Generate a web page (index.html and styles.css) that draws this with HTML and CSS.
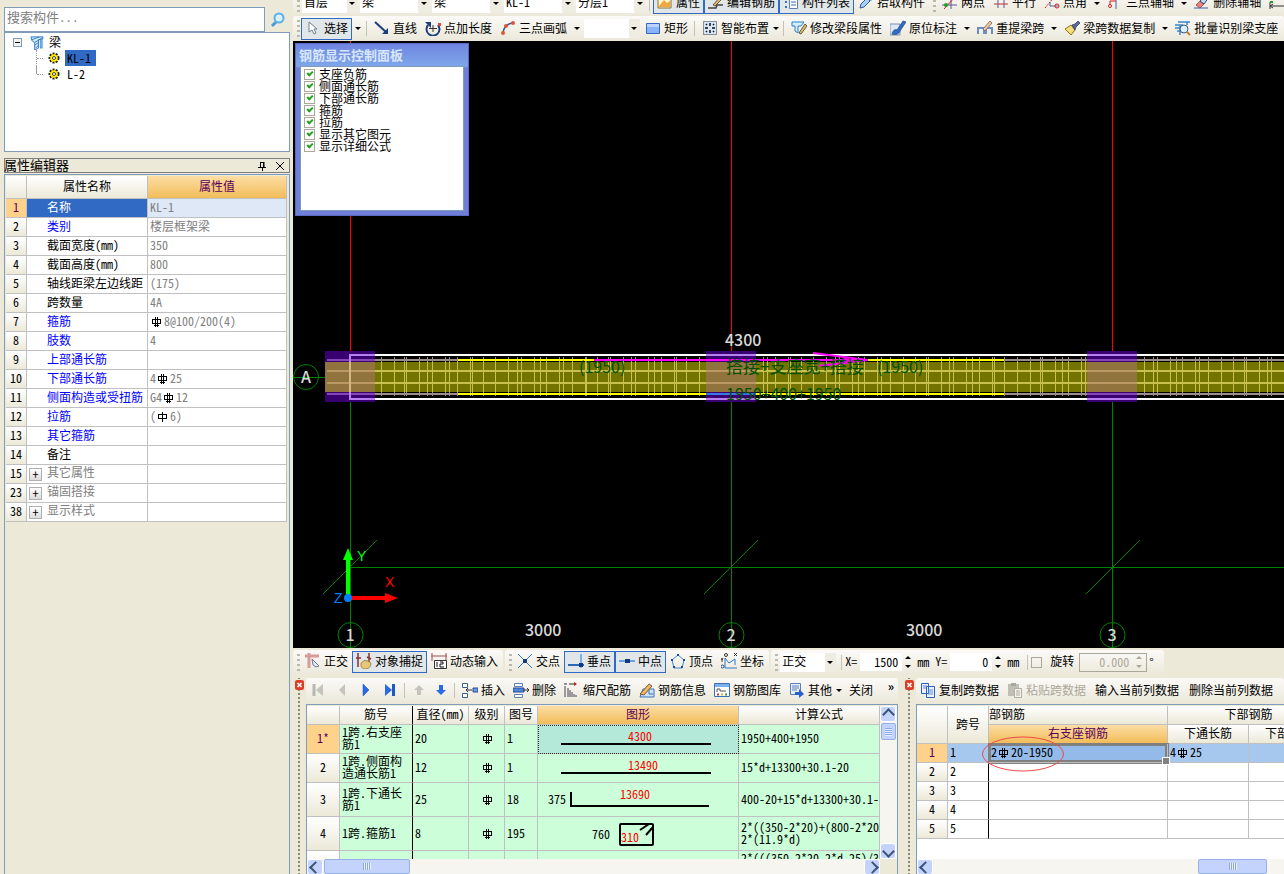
FILE: index.html
```html
<!DOCTYPE html>
<html lang="zh-CN">
<head>
    <meta charset="UTF-8">
    <meta name="viewport" content="width=device-width, initial-scale=1.0">
    <title>梁 - 钢筋编辑</title>
    <link rel="stylesheet" href="styles.css">
</head>
<body>
    <!-- icons -->
    <svg class="defs" aria-hidden="true">
        <symbol id="i-arrow" viewBox="0 0 16 16"><path d="M4 2v10l3-2 2 4 2-1-2-4h3z" fill="#fff" stroke="#6a7f9c"/></symbol>
        <symbol id="i-line" viewBox="0 0 16 16"><path d="M1 2l11 10" stroke="#1b3f7c" stroke-width="2"/><path d="M14 8v6H8z" fill="#1b3f7c"/></symbol>
        <symbol id="i-length" viewBox="0 0 16 16"><path d="M3 5a6.500 6.500 0 1 0 10 0" fill="none" stroke="#1d3e7a" stroke-width="2"/><path d="M0 2h6v6z" fill="#1d3e7a"/><path d="M8 5v7M4 8.500h8" stroke="#333"/><path d="M13 3h3v3h-3z" fill="#d04a4a"/></symbol>
        <symbol id="i-arc" viewBox="0 0 16 16"><path d="M3 13Q4 4 13 3" fill="none" stroke="#2c5a9c" stroke-width="1.500"/><circle cx="3" cy="13" r="2" fill="#e0563c"/><circle cx="6" cy="6" r="2" fill="#e0563c"/><circle cx="13" cy="3" r="2" fill="#e0563c"/></symbol>
        <symbol id="i-rect" viewBox="0 0 16 16"><path d="M1.500 3.500h13v10h-13z" fill="#8ab4f8" stroke="#3565c8"/><path d="M2 4h12v3H2z" fill="#bcd4ff"/></symbol>
        <symbol id="i-smart" viewBox="0 0 16 16"><path d="M1.500 1.500h13v13h-13z" fill="#d5e6f8" stroke="#333" stroke-dasharray="1 1"/><path d="M8 3v3M8 10v3M3 8h3M10 8h3M4 4l1 1M11 11l1 1M12 4l-1 1M5 11l-1 1" stroke="#111" stroke-width="1.500"/></symbol>
        <symbol id="i-modify" viewBox="0 0 16 16"><path d="M1 2h12l-3 4H7v7l-3-2V6H1z" fill="#d5efff" stroke="#2a80c8"/><path d="M8 13l6-9 2 2-6 8z" fill="#e6c35a" stroke="#333" stroke-width=".8"/></symbol>
        <symbol id="i-mark" viewBox="0 0 16 16"><path d="M0 4h10v11H0z" fill="#dce8f8" stroke="#7a90b0"/><path d="M2 14c1-4 3-5 5-4l6-9 3 1-6 9c-1 3-4 4-8 3z" fill="#2f6fc8" stroke="#1d3e7a" stroke-width=".7"/></symbol>
        <symbol id="i-span" viewBox="0 0 16 16"><path d="M1 14V8h6v6M9 14V8h6v6" fill="none" stroke="#6a8fc8" stroke-width="2"/><path d="M6 9l7-8 2 2-7 8z" fill="#e8c8a0" stroke="#806050" stroke-width=".8"/></symbol>
        <symbol id="i-brush" viewBox="0 0 16 16"><path d="M1 9l6-4 4 5-4 5z" fill="#f2df7a" stroke="#8a7420"/><path d="M8 5l3-1 3-3 2 2-4 4-1 3z" fill="#5a6a94" stroke="#38406a" stroke-width=".8"/></symbol>
        <symbol id="i-batch" viewBox="0 0 16 16"><path d="M0 5h8M3 2h12M0 8h6M2 11h4M5 5v10M12 2v3" stroke="#3a86cc" stroke-width="1.500"/><circle cx="9" cy="9" r="4" fill="#d8f0ff" stroke="#3a5a80"/><path d="M12 12l3 3" stroke="#c87a2a" stroke-width="2"/></symbol>
        <symbol id="i-prop" viewBox="0 0 16 16"><path d="M1 3h13v11H1z" fill="#fff4c8" stroke="#8a7040"/><path d="M2 12l5-6 3 3 3-2v6H2z" fill="#f0a840"/></symbol>
        <symbol id="i-edit" viewBox="0 0 16 16"><path d="M0 14h8l1-3h6" fill="none" stroke="#444" stroke-width="1.500"/><path d="M5 11l7-8 2 2-7 7z" fill="#e0b860" stroke="#444" stroke-width=".8"/></symbol>
        <symbol id="i-list" viewBox="0 0 16 16"><path d="M2 3h2M2 8h2M2 13h2" stroke="#3a70c0" stroke-width="2"/><path d="M6.500 1.500h8v13h-8z" fill="#fff" stroke="#5a80b8"/><path d="M8 5h5M8 8h5M8 11h5" stroke="#3a70c0"/></symbol>
        <symbol id="i-pick" viewBox="0 0 16 16"><path d="M2 14l1-4 6-6 3 3-6 6z" fill="#a8d0f8" stroke="#2a5aa0"/><path d="M9 3l3-2 3 3-2 3z" fill="#2a5aa0"/></symbol>
        <symbol id="i-twopt" viewBox="0 0 16 16"><path d="M0 11h15M9 1v14" stroke="#555a9c"/><path d="M2 15L13 3" stroke="#d02020"/><circle cx="4" cy="11" r="2" fill="#2a9a2a"/></symbol>
        <symbol id="i-parallel" viewBox="0 0 16 16"><path d="M5 1v13M11 1v13" stroke="#555a9c"/><path d="M1 5h14M1 10h14" stroke="#c03030"/></symbol>
        <symbol id="i-angle" viewBox="0 0 16 16"><path d="M1 14L11 2" stroke="#d02020" stroke-dasharray="2 1"/><path d="M6 8v4h8" fill="none" stroke="#555a9c"/><circle cx="13" cy="12" r="2" fill="none" stroke="#d02020"/></symbol>
        <symbol id="i-three" viewBox="0 0 16 16"><path d="M1 5h14M9 2v13" stroke="#4a60a8"/><path d="M3 12V7h6" fill="none" stroke="#d02020"/><circle cx="3" cy="12" r="1.500" fill="#fff" stroke="#d02020"/></symbol>
        <symbol id="i-erase" viewBox="0 0 16 16"><path d="M0 14h14" stroke="#3a60a8"/><path d="M2 11l4-4 4 3-4 4z" fill="#f08080" stroke="#803030" stroke-width=".7"/><path d="M6 7l6-6 3 2-5 7z" fill="#c8d8f0" stroke="#2a4a80"/></symbol>
        <symbol id="i-dim" viewBox="0 0 16 16"><path d="M1 8v7M1 12h14M4 10l-3 2 3 2" fill="none" stroke="#333"/><path d="M1 7h3v2H1z" fill="#2a9a2a"/></symbol>
        <symbol id="i-ortho" viewBox="0 0 16 16"><path d="M0 3h14M4 0v15" stroke="#d89a9a" stroke-width="3"/><path d="M7 6l7 7-3 1-3-2z" fill="#e6ebf4" stroke="#6a7894"/></symbol>
        <symbol id="i-snap" viewBox="0 0 16 16"><path d="M2 0v14M0 5h5M13 0v9M11 4l4 2" stroke="#8a3030" stroke-width="1.500"/><path d="M5 10q3-4 7-2l3 2q0 5-5 6-6 0-5-6z" fill="#e6c878" stroke="#8a6a30" stroke-width=".7"/></symbol>
        <symbol id="i-dyn" viewBox="0 0 16 16"><path d="M0 3h16M1 0v8M15 0v8" stroke="#a05050"/><path d="M3.500 7.500h12v8h-12z" fill="#fff" stroke="#333"/><path d="M6 9v5M9 9h3v2H9v3h4" fill="none" stroke="#111"/></symbol>
        <symbol id="i-cross" viewBox="0 0 16 16"><path d="M1 1l14 14M15 1L1 15" stroke="#2a78c8"/><path d="M6 6h4v4H6z" fill="#123a7a"/></symbol>
        <symbol id="i-perp" viewBox="0 0 16 16"><path d="M13 1v14" stroke="#7ab0e8" stroke-width="2"/><path d="M0 12h16" stroke="#2a68b8" stroke-width="2"/><path d="M11 10h4v4h-4z" fill="#123a7a"/></symbol>
        <symbol id="i-mid" viewBox="0 0 16 16"><path d="M0 8h16" stroke="#6aa4e0" stroke-width="2"/><path d="M6 6h5v4H6z" fill="#123a7a"/></symbol>
        <symbol id="i-vertex" viewBox="0 0 16 16"><path d="M8 2l6 5-2 8H4L2 7z" fill="none" stroke="#3a88d0"/><path d="M7 1h2v2H7zM1 6h2v2H1zM13 6h2v2h-2zM3 13h2v2H3zM11 13h2v2h-2z" fill="#1c4a8c"/></symbol>
        <symbol id="i-coord" viewBox="0 0 16 16"><path d="M4 5v10h12M4 5l4 5 6-4M14 6v6" fill="none" stroke="#2a78c8"/><circle cx="5" cy="2" r="1.500" fill="none" stroke="#333"/><path d="M13 0l3 3M16 0l-3 3M0 5l1 2 1-2M1 7v2" stroke="#333" fill="none"/><circle cx="1.500" cy="13.500" r="1.500" fill="none" stroke="#1c4a8c"/></symbol>
        <symbol id="i-first" viewBox="0 0 16 16"><path d="M4 2v12" stroke="#b8b8b0" stroke-width="3"/><path d="M13 2v12L6 8z" fill="#c4c4bc"/></symbol>
        <symbol id="i-prev" viewBox="0 0 16 16"><path d="M11 2v12L5 8z" fill="#c4c4bc"/></symbol>
        <symbol id="i-next" viewBox="0 0 16 16"><path d="M5 2v12l6-6z" fill="#2a6ae8" stroke="#1c4ab8" stroke-width=".5"/></symbol>
        <symbol id="i-last" viewBox="0 0 16 16"><path d="M3 2v12l7-6z" fill="#2a6ae8"/><path d="M11.500 2v12" stroke="#1c58c8" stroke-width="3"/></symbol>
        <symbol id="i-up" viewBox="0 0 16 16"><path d="M8 3l5 5h-3v5H6V8H3z" fill="#c4c4bc"/></symbol>
        <symbol id="i-down" viewBox="0 0 16 16"><path d="M8 13l5-5h-3V3H6v5H3z" fill="#2a6ae8"/></symbol>
        <symbol id="i-insert" viewBox="0 0 16 16"><path d="M.5 1.500h5v4h-5zM.5 11.500h5v4h-5z" fill="#fff" stroke="#3a5a98"/><path d="M11 6h5v4h-5z" fill="#6a9ae8" stroke="#2a4a98"/><path d="M4 8h6M6 6L4 8l2 2" fill="none" stroke="#333"/></symbol>
        <symbol id="i-delete" viewBox="0 0 16 16"><path d="M1.500 1.500h8v3h-8zM1.500 12.500h8v3h-8z" fill="#fff" stroke="#5a80b8"/><path d="M0 6h11v4H0z" fill="#4a88e0" stroke="#2a4a98"/><path d="M10 8h6M14 6l2 2-2 2" fill="none" stroke="#333"/></symbol>
        <symbol id="i-scale" viewBox="0 0 16 16"><path d="M0 2h3M5 2h7" stroke="#333"/><path d="M10 0l3 2-3 2z" fill="#c02020"/><path d="M1 4v11M4 6v9M6 8v7M8 10v5M10 12v3M12 13v2" stroke="#445"/></symbol>
        <symbol id="i-info" viewBox="0 0 16 16"><path d="M1 15l3-8h11v8z" fill="#cfe2fa" stroke="#3a70b8"/><path d="M1 12L10 2l3 2-8 9z" fill="#f0b860" stroke="#604020" stroke-width=".8"/><path d="M10 8v4h4" stroke="#3a70b8" fill="none"/></symbol>
        <symbol id="i-lib" viewBox="0 0 16 16"><path d="M.5 1.500h15v13H.5z" fill="#fff" stroke="#3a70b8"/><path d="M1 2h14v3H1z" fill="#7ab0f0"/><path d="M3 10V7h3v2h6" fill="none" stroke="#555"/><path d="M3 12.500h2" stroke="#d03030" stroke-width="2"/><path d="M7 12.500h2" stroke="#e0b020" stroke-width="2"/><path d="M11 12.500h2" stroke="#30a050" stroke-width="2"/></symbol>
        <symbol id="i-other" viewBox="0 0 16 16"><path d="M1.500 1.500h10v11h-10z" fill="#e8f0fc" stroke="#5a80b8"/><path d="M3 4h7M3 6h7M3 8h5" stroke="#5a80b8"/><path d="M6 10h4V7l5 5-5 4v-3H6z" fill="#2a60c8"/></symbol>
        <symbol id="i-copy" viewBox="0 0 16 16"><path d="M1.500 1.500h7v10h-7zM6.500 4.500h8v11h-8z" fill="#eaf2ff" stroke="#2a60b8"/><path d="M3 4h4M3 6h3M8 8h5M8 10h5M8 12h5" stroke="#5a8ad8"/></symbol>
        <symbol id="i-paste" viewBox="0 0 16 16"><path d="M1 2h11v12H1z" fill="#c0bfb4"/><path d="M4 1h5v3H4z" fill="#a8a79c"/><path d="M7.500 6.500h7v9h-7z" fill="#f4f3ec" stroke="#b0afa4"/><path d="M9 9h4M9 11h4M9 13h4" stroke="#b0afa4"/></symbol>
        <symbol id="i-search" viewBox="0 0 16 16"><path d="M2 14l4-4" stroke="#4a9ae0" stroke-width="3"/><circle cx="9" cy="6" r="4.500" fill="#d8f0ff" stroke="#5ab0e8" stroke-width="2"/></symbol>
        <symbol id="i-beam" viewBox="0 0 16 16"><path d="M1 2h13l-1 3H9v9l-4 2V8L2 6z" fill="#d8ecfc" stroke="#2a78c8"/><path d="M2 5l8-3M5 8l8-5M5 11l4-3M6 14l3-3" stroke="#2a78c8"/><path d="M11 6h2v8h-2z" fill="#8ac0f0" stroke="#2a78c8" stroke-width=".7"/></symbol>
        <symbol id="i-gear" viewBox="0 0 12 12"><circle cx="6" cy="6" r="4.500" fill="#ffee00" stroke="#222" stroke-width="2" stroke-dasharray="2 1.200"/><circle cx="6" cy="6" r="3.500" fill="#ffee00"/><circle cx="6" cy="6" r="1.500" fill="#fff" stroke="#444"/></symbol>
        <symbol id="i-close" viewBox="0 0 9 10"><path d="M2.500 3l4 4M6.500 3l-4 4" stroke="#fff" stroke-width="1.500"/></symbol>
        <!-- rebar grades -->
        <symbol id="g-hrb" viewBox="0 0 10 10"><path d="M.5 2.500h8v4h-8zM3.500 0v9.500M5.500 0v9.500M2 8.500h5" fill="none" stroke="currentColor" shape-rendering="crispEdges"/></symbol>
        <symbol id="g-hpb" viewBox="0 0 10 10"><path d="M.5 2.500h8v4h-8zM4.500 0v9.500" fill="none" stroke="currentColor" shape-rendering="crispEdges"/></symbol>
    </svg>

    <aside class="sidebar">
        <div class="search-row">
            <input type="text" id="search" placeholder="搜索构件..." aria-label="搜索构件">
            <button class="search-btn" aria-label="搜索"><svg><use href="#i-search"/></svg></button>
        </div>
        <div class="tree">
            <div class="tree-row"><span class="fold"></span><svg><use href="#i-beam"/></svg><span>梁</span></div>
            <div class="tree-row child"><svg><use href="#i-gear"/></svg><span class="label selected">KL-1</span></div>
            <div class="tree-row child last"><svg><use href="#i-gear"/></svg><span class="label">L-2</span></div>
        </div>
        <div class="panel-title">
            <h2>属性编辑器</h2>
            <button aria-label="固定"><svg viewBox="0 0 10 10"><path d="M3.500 1v5M3 1.500h4M1 6.500h8M5.500 6v4" fill="none" stroke="#000"/><path d="M6 1h1.500v5H6z"/></svg></button>
            <button aria-label="关闭"><svg viewBox="0 0 10 10"><path d="M1 1l8 8M9 1L1 9" stroke="#000"/></svg></button>
        </div>
        <div class="props">
            <table class="grid">
                <colgroup><col class="w-21"><col class="w-121"><col></colgroup>
                <thead>
                    <tr><th></th><th>属性名称</th><th class="hot">属性值</th></tr>
                </thead>
                <tbody>
                    <tr class="current"><th>1</th><td>名称</td><td>KL-1</td></tr>
                    <tr class="blue"><th>2</th><td>类别</td><td>楼层框架梁</td></tr>
                    <tr><th>3</th><td>截面宽度(mm)</td><td>350</td></tr>
                    <tr><th>4</th><td>截面高度(mm)</td><td>800</td></tr>
                    <tr><th>5</th><td>轴线距梁左边线距</td><td>(175)</td></tr>
                    <tr><th>6</th><td>跨数量</td><td>4A</td></tr>
                    <tr class="blue"><th>7</th><td>箍筋</td><td><svg class="grade"><use href="#g-hrb"/></svg>8@100/200(4)</td></tr>
                    <tr class="blue"><th>8</th><td>肢数</td><td>4</td></tr>
                    <tr class="blue"><th>9</th><td>上部通长筋</td><td></td></tr>
                    <tr class="blue"><th>10</th><td>下部通长筋</td><td>4<svg class="grade"><use href="#g-hrb"/></svg>25</td></tr>
                    <tr class="blue"><th>11</th><td>侧面构造或受扭筋</td><td>G4<svg class="grade"><use href="#g-hrb"/></svg>12</td></tr>
                    <tr class="blue"><th>12</th><td>拉筋</td><td>(<svg class="grade"><use href="#g-hpb"/></svg>6)</td></tr>
                    <tr class="blue"><th>13</th><td>其它箍筋</td><td></td></tr>
                    <tr><th>14</th><td>备注</td><td></td></tr>
                    <tr class="group"><th>15</th><td><button class="plus">+</button>其它属性</td><td></td></tr>
                    <tr class="group"><th>23</th><td><button class="plus">+</button>锚固搭接</td><td></td></tr>
                    <tr class="group"><th>38</th><td><button class="plus">+</button>显示样式</td><td></td></tr>
                </tbody>
            </table>
        </div>
    </aside>

    <main class="main">
        <div class="toolbar toolbar-top">
            <span class="grip"></span>
            <span class="combo short"><select aria-label="楼层"><option>首层</option></select></span>
            <span class="combo"><select aria-label="构件类别"><option>梁</option></select></span>
            <span class="combo"><select aria-label="构件类型"><option>梁</option></select></span>
            <span class="combo"><select aria-label="构件"><option>KL-1</option></select></span>
            <span class="combo"><select aria-label="分层"><option>分层1</option></select></span>
            <span class="sep"></span>
            <button class="tool on"><svg><use href="#i-prop"/></svg>属性</button>
            <button class="tool on"><svg><use href="#i-edit"/></svg>编辑钢筋</button>
            <button class="tool on"><svg><use href="#i-list"/></svg>构件列表</button>
            <button class="tool"><svg><use href="#i-pick"/></svg>拾取构件</button>
            <span class="grip"></span>
            <button class="tool"><svg><use href="#i-twopt"/></svg>两点</button>
            <button class="tool"><svg><use href="#i-parallel"/></svg>平行</button>
            <button class="tool"><svg><use href="#i-angle"/></svg>点角</button>
            <button class="drop" aria-label="更多"></button>
            <button class="tool"><svg><use href="#i-three"/></svg>三点辅轴</button>
            <button class="drop" aria-label="更多"></button>
            <button class="tool"><svg><use href="#i-erase"/></svg>删除辅轴</button>
            <button class="tool" aria-label="标注"><svg><use href="#i-dim"/></svg></button>
        </div>
        <div class="toolbar">
            <span class="grip"></span>
            <button class="tool on"><svg><use href="#i-arrow"/></svg>选择</button>
            <button class="drop" aria-label="更多"></button>
            <span class="sep"></span>
            <button class="tool"><svg><use href="#i-line"/></svg>直线</button>
            <button class="tool"><svg><use href="#i-length"/></svg>点加长度</button>
            <button class="tool"><svg><use href="#i-arc"/></svg>三点画弧</button>
            <button class="drop" aria-label="更多"></button>
            <span class="combo short"><select aria-label="绘制方式"><option></option></select></span>
            <button class="tool"><svg><use href="#i-rect"/></svg>矩形</button>
            <span class="sep"></span>
            <button class="tool"><svg><use href="#i-smart"/></svg>智能布置</button>
            <button class="drop tight" aria-label="更多"></button>
            <span class="sep"></span>
            <button class="tool"><svg><use href="#i-modify"/></svg>修改梁段属性</button>
            <button class="tool"><svg><use href="#i-mark"/></svg>原位标注</button>
            <button class="drop" aria-label="更多"></button>
            <button class="tool"><svg><use href="#i-span"/></svg>重提梁跨</button>
            <button class="drop" aria-label="更多"></button>
            <button class="tool"><svg><use href="#i-brush"/></svg>梁跨数据复制</button>
            <button class="drop" aria-label="更多"></button>
            <button class="tool"><svg><use href="#i-batch"/></svg>批量识别梁支座</button>
        </div>

        <section class="canvas">
            <svg class="drawing">
                <!-- axes -->
                <g stroke="#f00">
                    <path d="M57.500 0V310M438.500 0V310M819.500 0V310"/>
                </g>
                <g stroke="#008000" fill="none">
                    <path d="M57.500 361V607M438.500 361V607M819.500 361V607M0 336.500H32"/>
                    <line x1="57" y1="526.500" x2="100%" y2="526.500"/>
                    <path d="M30 553L84 499M411 553L465 499M793 553L847 499"/>
                    <circle cx="13" cy="336" r="12.500"/>
                    <circle cx="57.500" cy="594" r="12.500"/>
                    <circle cx="438.500" cy="594" r="12.500"/>
                    <circle cx="819.500" cy="594" r="12.500"/>
                </g>
                <!-- beam -->
                <path id="ticks" stroke="#9c8c8c" shape-rendering="crispEdges"/>
                <g stroke="#9c8c8c" stroke-width="2">
                    <line x1="34" y1="319" x2="100%" y2="319"/>
                    <line x1="34" y1="330" x2="100%" y2="330"/>
                    <line x1="34" y1="342" x2="100%" y2="342"/>
                    <line x1="34" y1="353" x2="100%" y2="353"/>
                </g>
                <g stroke="#fff" stroke-width="2">
                    <line x1="56" y1="314" x2="100%" y2="314"/>
                    <line x1="56" y1="358" x2="100%" y2="358"/>
                    <line x1="57" y1="313" x2="57" y2="359"/>
                </g>
                <g fill="#7000e0" fill-opacity=".5">
                    <rect x="32" y="310" width="50" height="51"/>
                    <rect x="413" y="310" width="50" height="51"/>
                    <rect x="794" y="310" width="50" height="51"/>
                </g>
                <rect x="32" y="321" width="100%" height="30" fill="#ff0" fill-opacity=".45"/>
                <path d="M165 319H301M574 319H711M165 353H413M463 353H711" stroke="#ff0" stroke-width="2"/>
                <path d="M413 353H463" stroke="#3878e8" stroke-width="2"/>
                <path d="M301 319H575M520 312L574 319L526 325" stroke="#f0f" stroke-width="2" fill="none"/>
                <path d="M550 317L575 319L550 323z" fill="#f0f"/>
                <!-- texts -->
                <g class="note">
                    <text x="286" y="332">(1950)</text>
                    <text x="433" y="332" class="wide">搭接+支座宽+搭接</text>
                    <text x="584" y="332">(1950)</text>
                    <text x="433" y="359">1950+400+1950</text>
                </g>
                <g class="dim">
                    <text x="432" y="305">4300</text>
                    <text x="232" y="595">3000</text>
                    <text x="613" y="595">3000</text>
                    <g text-anchor="middle">
                        <text x="13" y="342">A</text>
                        <text x="57" y="600">1</text>
                        <text x="438" y="600">2</text>
                        <text x="819" y="600">3</text>
                    </g>
                </g>
                <!-- ucs -->
                <path d="M53 557V519H50L55 507L60 519H57V557z" fill="#0f0"/>
                <path d="M55 555H92V552L105 557L92 562V559H55z" fill="#f00"/>
                <circle cx="55" cy="557" r="4" fill="#0080ff"/>
                <g class="ucs">
                    <text x="64" y="520" fill="#0f0">Y</text>
                    <text x="92" y="546" fill="#f00">X</text>
                    <text x="41" y="562" fill="#0080ff">Z</text>
                </g>
            </svg>

            <div class="float-panel">
                <h3>钢筋显示控制面板</h3>
                <div class="float-body">
                    <label><input type="checkbox" checked>支座负筋</label>
                    <label><input type="checkbox" checked>侧面通长筋</label>
                    <label><input type="checkbox" checked>下部通长筋</label>
                    <label><input type="checkbox" checked>箍筋</label>
                    <label><input type="checkbox" checked>拉筋</label>
                    <label><input type="checkbox" checked>显示其它图元</label>
                    <label><input type="checkbox" checked>显示详细公式</label>
                </div>
            </div>
        </section>

        <div class="snap-row">
            <div class="toolbar">
                <span class="grip"></span>
                <button class="tool"><svg><use href="#i-ortho"/></svg>正交</button>
                <button class="tool on"><svg><use href="#i-snap"/></svg>对象捕捉</button>
                <button class="tool"><svg><use href="#i-dyn"/></svg>动态输入</button>
            </div>
            <div class="toolbar">
                <span class="grip"></span>
                <button class="tool"><svg><use href="#i-cross"/></svg>交点</button>
                <button class="tool on"><svg><use href="#i-perp"/></svg>垂点</button>
                <button class="tool on"><svg><use href="#i-mid"/></svg>中点</button>
                <button class="tool"><svg><use href="#i-vertex"/></svg>顶点</button>
                <button class="tool"><svg><use href="#i-coord"/></svg>坐标</button>
            </div>
            <div class="toolbar coords">
                <span class="grip"></span>
                <span class="combo short"><select aria-label="偏移方式"><option>正交</option></select></span>
                <span class="sep"></span>
                <label for="off-x">X=</label>
                <input type="text" id="off-x" value="1500">
                <span class="spin"><button aria-label="增加"></button><button aria-label="减少"></button></span>
                <span class="unit">mm</span>
                <label for="off-y">Y=</label>
                <input type="text" id="off-y" value="0">
                <span class="spin"><button aria-label="增加"></button><button aria-label="减少"></button></span>
                <span class="unit">mm</span>
                <span class="sep"></span>
                <input type="checkbox" id="rotate">
                <label for="rotate">旋转</label>
                <span class="angle"><input type="text" value="0.000" aria-label="角度" disabled><span class="spin"><button aria-label="增加" disabled></button><button aria-label="减少" disabled></button></span></span>
                <span>°</span>
            </div>
        </div>

        <div class="docks">
            <section class="dock">
                <div class="dock-side"><button class="dock-close" aria-label="关闭"><svg><use href="#i-close"/></svg></button></div>
                <div class="dock-main">
                    <div class="toolbar">
                        <button class="tool nav" aria-label="首条"><svg><use href="#i-first"/></svg></button>
                        <button class="tool nav" aria-label="上一条"><svg><use href="#i-prev"/></svg></button>
                        <button class="tool nav" aria-label="下一条"><svg><use href="#i-next"/></svg></button>
                        <button class="tool nav" aria-label="末条"><svg><use href="#i-last"/></svg></button>
                        <span class="sep"></span>
                        <button class="tool move" aria-label="上移"><svg><use href="#i-up"/></svg></button>
                        <button class="tool move" aria-label="下移"><svg><use href="#i-down"/></svg></button>
                        <span class="sep"></span>
                        <button class="tool"><svg><use href="#i-insert"/></svg>插入</button>
                        <button class="tool"><svg><use href="#i-delete"/></svg>删除</button>
                        <button class="tool"><svg><use href="#i-scale"/></svg>缩尺配筋</button>
                        <button class="tool"><svg><use href="#i-info"/></svg>钢筋信息</button>
                        <button class="tool"><svg><use href="#i-lib"/></svg>钢筋图库</button>
                        <button class="tool"><svg><use href="#i-other"/></svg>其他</button>
                        <button class="drop tight" aria-label="更多"></button>
                        <button class="tool text">关闭</button>
                        <button class="more" aria-label="更多工具">»</button>
                    </div>
                    <div class="sheet">
                        <div class="sheet-view">
                            <table class="grid bars">
                                <colgroup><col class="w-33"><col class="w-73"><col class="w-56"><col class="w-36"><col class="w-33"><col class="w-201"><col></colgroup>
                                <thead>
                                    <tr><th></th><th>筋号</th><th>直径(mm)</th><th>级别</th><th>图号</th><th class="hot">图形</th><th class="formula">计算公式</th></tr>
                                </thead>
                                <tbody>
                                    <tr class="current">
                                        <th>1*</th><td>1跨.右支座筋1</td><td>20</td><td><svg class="grade"><use href="#g-hrb"/></svg></td><td>1</td>
                                        <td class="shape"><svg height="28"><path d="M23 19H173"/><text x="102" y="16" class="len">4300</text></svg></td>
                                        <td>1950+400+1950</td>
                                    </tr>
                                    <tr>
                                        <th>2</th><td>1跨.侧面构造通长筋1</td><td>12</td><td><svg class="grade"><use href="#g-hrb"/></svg></td><td>1</td>
                                        <td class="shape"><svg height="28"><path d="M23 19H173"/><text x="105" y="16" class="len">13490</text></svg></td>
                                        <td>15*d+13300+30.1-20</td>
                                    </tr>
                                    <tr class="tall">
                                        <th>3</th><td>1跨.下通长筋1</td><td>25</td><td><svg class="grade"><use href="#g-hrb"/></svg></td><td>18</td>
                                        <td class="shape"><svg height="33"><path d="M33 9V23H171"/><text x="19" y="21">375</text><text x="97" y="16" class="len">13690</text></svg></td>
                                        <td>400-20+15*d+13300+30.1-20</td>
                                    </tr>
                                    <tr class="tall">
                                        <th>4</th><td>1跨.箍筋1</td><td>8</td><td><svg class="grade"><use href="#g-hrb"/></svg></td><td>195</td>
                                        <td class="shape"><svg height="33"><rect x="82" y="7" width="33" height="21" rx="1"/><path d="M102 13L111 7M108 18L115 10"/><text x="63" y="22">760</text><text x="92" y="25" class="len">310</text></svg></td>
                                        <td>2*((350-2*20)+(800-2*20))+<br>2*(11.9*d)</td>
                                    </tr>
                                    <tr class="tall cut">
                                        <th></th><td></td><td></td><td></td><td></td><td></td>
                                        <td>2*(((350-2*20-2*d-25)/3*1</td>
                                    </tr>
                                </tbody>
                            </table>
                        </div>
                        <div class="vscroll"><button class="sb up" aria-label="向上"></button><span class="thumb"></span><button class="sb down" aria-label="向下"></button></div>
                        <div class="hscroll"><button class="sb left" aria-label="向左"></button><span class="thumb"></span><button class="sb right" aria-label="向右"></button></div>
                    </div>
                </div>
            </section>

            <section class="dock">
                <div class="dock-side"><button class="dock-close" aria-label="关闭"><svg><use href="#i-close"/></svg></button></div>
                <div class="dock-main">
                    <div class="toolbar">
                        <button class="tool"><svg><use href="#i-copy"/></svg>复制跨数据</button>
                        <button class="tool" disabled><svg><use href="#i-paste"/></svg>粘贴跨数据</button>
                        <button class="tool text">输入当前列数据</button>
                        <button class="tool text">删除当前列数据</button>
                    </div>
                    <div class="sheet open">
                        <div class="sheet-view">
                            <table class="grid spans">
                                <colgroup><col class="w-31"><col class="w-41"><col class="w-179"><col class="w-81"><col class="w-81"></colgroup>
                                <thead>
                                    <tr><th rowspan="2"></th><th rowspan="2">跨号</th><th class="cropped">部钢筋</th><th colspan="2">下部钢筋</th></tr>
                                    <tr><th class="hot">右支座钢筋</th><th>下通长筋</th><th>下部钢筋</th></tr>
                                </thead>
                                <tbody>
                                    <tr class="current">
                                        <th>1</th><td>1</td>
                                        <td class="active">2<svg class="grade"><use href="#g-hrb"/></svg>20-1950<svg class="ring" viewBox="0 0 84 38"><ellipse cx="42" cy="19" rx="40.500" ry="17"/></svg></td>
                                        <td>4<svg class="grade"><use href="#g-hrb"/></svg>25</td><td></td>
                                    </tr>
                                    <tr><th>2</th><td>2</td><td></td><td></td><td></td></tr>
                                    <tr><th>3</th><td>3</td><td></td><td></td><td></td></tr>
                                    <tr><th>4</th><td>4</td><td></td><td></td><td></td></tr>
                                    <tr><th>5</th><td>5</td><td></td><td></td><td></td></tr>
                                </tbody>
                            </table>
                        </div>
                        <div class="hscroll far"><button class="sb left" aria-label="向左"></button><span class="thumb"></span></div>
                    </div>
                </div>
            </section>
        </div>
    </main>

    <script>
        // stirrup marks: two overlapping spacings along the beam, none inside the columns
        const columns = [[32, 82], [413, 463], [794, 844]];

        function marks(start, step, end) {
            let d = "";
            for (let x = start; x < end; x += step) {
                if (!columns.some(c => x > c[0] && x < c[1])) {
                    d += `M${Math.round(x) + 0.5} 316V355`;
                }
            }
            return d;
        }

        const width = document.querySelector(".drawing").clientWidth;
        document.getElementById("ticks").setAttribute("d", marks(88, 12.72, width) + marks(111, 22.7, width));
    </script>
</body>
</html>
```
FILE: styles.css
```css
* {
    box-sizing: border-box;
}
body {
    margin: 0;
    height: 100vh;
    display: flex;
    overflow: hidden;
    background: #ece9d8;
    color: #000;
    font: 12px/14px "Noto Sans Mono CJK SC", "Noto Sans CJK SC", sans-serif;
}
button, input, select {
    font: inherit;
    color: inherit;
    margin: 0;
    padding: 0;
    border: none;
    border-radius: 0;
    background: none;
}
h2, h3 {
    margin: 0;
    font-size: 13px;
    font-weight: normal;
}
.defs {
    position: absolute;
    width: 0;
    height: 0;
}

/* sidebar */
.sidebar {
    flex: none;
    width: 293px;
    padding: 7px 3px 0 4px;
    display: flex;
    flex-direction: column;
}
.search-row {
    display: flex;
    height: 25px;
}
.search-row input {
    flex: 1;
    min-width: 0;
    padding: 0 2px 5px;
    border: 1px solid #7f9db9;
    background: #fff;
    font-size: 13px;
}
.search-row input::placeholder {
    color: #808080;
    opacity: 1;
}
.search-btn {
    width: 25px;
}
.search-btn svg {
    width: 16px;
    height: 16px;
    vertical-align: middle;
}
.tree {
    height: 120px;
    padding: 1px 8px;
    border: 1px solid #7f9db9;
    background: #fff;
}
.tree-row {
    display: flex;
    align-items: center;
    height: 16px;
    gap: 4px;
}
.tree-row svg {
    width: 15px;
    height: 15px;
}
.fold {
    width: 9px;
    height: 9px;
    margin-right: 4px;
    border: 1px solid #7f9db9;
    background: linear-gradient(#000, #000) center / 5px 1px no-repeat #f4f2ea;
}
.tree-row.child {
    margin-left: 23px;
    border-left: 1px dotted #999;
    gap: 5px;
}
.tree-row.child::before {
    content: "";
    width: 6px;
    border-top: 1px dotted #999;
}
.tree-row.last {
    border-image: linear-gradient(#999 50%, transparent 50%) 1;
}
.tree-row.child svg {
    width: 12px;
    height: 12px;
    flex: none;
}
.label {
    padding: 1px 5px 1px 2px;
}
.label.selected {
    background: #316ac5;
}
.panel-title {
    display: flex;
    align-items: center;
    height: 15px;
    margin-top: 6px;
    padding-right: 4px;
    gap: 8px;
    border: 1px solid #808080;
}
.panel-title h2 {
    flex: 1;
    margin-left: -1px;
    padding-bottom: 2px;
}
.panel-title button {
    width: 10px;
    height: 10px;
    display: flex;
}
.props {
    flex: 1;
    margin-top: 1px;
    padding: 1px 2px 0 1px;
    border: 1px solid #7f9db9;
    border-bottom: none;
}

/* grids */
.grid {
    width: 100%;
    table-layout: fixed;
    border-collapse: separate;
    border-spacing: 0;
}
.grid th, .grid td {
    height: 19px;
    padding: 0 0 2px 2px;
    border-right: 1px solid #c0c0c0;
    border-bottom: 1px solid #c0c0c0;
    font-weight: normal;
    white-space: nowrap;
    overflow: hidden;
    text-align: left;
}
.grid td {
    background: #fff;
}
.grid th {
    padding: 0 0 2px;
    text-align: center;
    background: linear-gradient(#fff, #ece9d8);
}
.grid thead th.hot {
    color: #5a005a;
    background: linear-gradient(#fcdda4, #f2bd5a);
}
.grid .current th {
    color: #5a005a;
    background: #ffd28c;
}
.grade {
    width: 10px;
    height: 10px;
    margin: 0 2px;
    color: #000;
    vertical-align: -1px;
}
.w-21 { width: 21px; }
.w-31 { width: 31px; }
.w-33 { width: 33px; }
.w-36 { width: 36px; }
.w-41 { width: 41px; }
.w-56 { width: 56px; }
.w-73 { width: 73px; }
.w-81 { width: 81px; }
.w-121 { width: 121px; }
.w-179 { width: 179px; }
.w-201 { width: 201px; }

.props thead th {
    height: 23px;
}
.props td:nth-child(2) {
    padding-left: 20px;
}
.props td:nth-child(3) {
    color: #808080;
}
.props .blue td:nth-child(2) {
    color: #00f;
}
.props .current td:nth-child(2) {
    color: #fff;
    background: #316ac5;
}
.props .current td:nth-child(3) {
    background: #dfe8f6;
}
.props .group td:nth-child(2) {
    padding-left: 2px;
    color: #808080;
}
.plus {
    width: 13px;
    height: 13px;
    margin-right: 5px;
    border: 1px solid #b0b0b0;
    background: linear-gradient(#fff, #dcdcdc);
    color: #000;
    line-height: 10px;
    vertical-align: -2px;
}

/* toolbars */
.main {
    flex: 1;
    min-width: 0;
    display: flex;
    flex-direction: column;
}
.toolbar {
    display: flex;
    align-items: center;
    flex: none;
    height: 25px;
    overflow: hidden;
    border-radius: 3px;
    background: linear-gradient(#fbfaf7, #ebe8da);
    white-space: nowrap;
}
.toolbar-top {
    height: 26px;
    margin-top: -10px;
}
.grip {
    flex: none;
    width: 3px;
    height: 17px;
    margin: 0 2px 0 4px;
    background: repeating-linear-gradient(#bdb9a8 0 2px, transparent 2px 5px);
}
.toolbar .grip:first-child {
    margin-right: 1px;
}
.sep {
    flex: none;
    width: 1px;
    height: 15px;
    margin: 0 3px 0 2px;
    background: #c5c2b2;
}
.tool {
    display: flex;
    align-items: center;
    flex: none;
    height: 22px;
    padding: 0 3px 2px;
    gap: 3px;
    border: 1px solid transparent;
}
.tool svg {
    width: 16px;
    height: 16px;
    flex: none;
}
.tool.on {
    border-color: #316ac5;
    background: #e1e6e8;
}
.tool:disabled {
    color: #aca899;
}
.tool.nav {
    width: 24px;
}
.tool.move {
    width: 22px;
    padding: 0 2px 2px;
}
.tool.text {
    padding: 0 4px 2px;
}
.drop {
    flex: none;
    width: 12px;
    height: 22px;
}
.drop.tight {
    margin: 0 -1px 0 -3px;
}
.drop::before, .combo::after {
    content: "";
    display: block;
    width: 0;
    margin: auto;
    border: 3px solid transparent;
    border-top-color: #000;
    border-bottom: none;
}
.combo {
    display: flex;
    flex: none;
    width: 70px;
    height: 19px;
    margin: 0 1px;
    background: linear-gradient(90deg, #fff 58px, #efede2 58px);
}
.combo.short {
    width: 56px;
    background: linear-gradient(90deg, #fff 45px, #efede2 45px);
}
.combo select {
    flex: 1;
    min-width: 0;
    padding: 0 0 2px 2px;
    appearance: none;
}
.combo::after {
    margin: 8px 3px;
}

/* drawing area */
.canvas {
    flex: 1;
    min-height: 0;
    position: relative;
    background: #000;
}
.drawing {
    position: absolute;
    inset: 0;
    width: 100%;
    height: 100%;
    font-family: "Noto Sans CJK SC", sans-serif;
    font-size: 16px;
}
.note {
    fill: #005000;
}
.note .wide {
    font-size: 17px;
}
.dim {
    fill: #d8d8d8;
    font-weight: 500;
}
.ucs {
    font-family: "Liberation Sans", sans-serif;
    font-size: 14px;
}
.float-panel {
    position: absolute;
    left: 2px;
    top: 2px;
    width: 174px;
    padding: 0 4px 4px;
    background: linear-gradient(#6f86e0, #7ea6ea 22px, #6f7fd8 24px);
    border: 1px solid #5a68c8;
}
.float-panel h3 {
    height: 22px;
    line-height: 22px;
    font-weight: bold;
    color: #d8e6fa;
    margin-left: -1px;
}
.float-body {
    height: 145px;
    padding: 1px 3px;
    border: 1px solid #7f9db9;
    background: #fff;
}
.float-body label {
    display: flex;
    align-items: center;
    height: 12px;
    gap: 4px;
    line-height: 12px;
}
input[type="checkbox"] {
    appearance: none;
    flex: none;
    display: grid;
    place-items: center;
    width: 11px;
    height: 11px;
    border: 1px solid #aca899;
    background: #fff;
}
input[type="checkbox"]:checked::before {
    content: "";
    box-sizing: content-box;
    width: 2px;
    height: 4px;
    margin-bottom: 2px;
    border: solid #21a121;
    border-width: 0 2px 2px 0;
    transform: rotate(45deg);
}

/* snap row */
.snap-row {
    display: flex;
    align-items: center;
    gap: 2px;
    height: 28px;
}
.snap-row .toolbar {
    padding-right: 1px;
}
.snap-row .coords {
    padding-right: 10px;
}
.coords label {
    padding-bottom: 2px;
}
.coords input[type="text"] {
    width: 42px;
    height: 18px;
    padding: 0 4px 2px 0;
    margin-left: 3px;
    background: #fff;
    text-align: right;
}
.coords .combo {
    margin-right: 3px;
}
.coords .unit {
    margin: 0 6px 0 2px;
}
.spin {
    display: flex;
    flex-direction: column;
    gap: 6px;
    width: 11px;
    padding: 0 2px;
    margin: 0 1px;
}
.spin button {
    width: 0;
    border: 3px solid transparent;
    border-top: none;
    border-bottom-color: #000;
}
.spin button + button {
    border-top: 3px solid #000;
    border-bottom: none;
}
.spin button:disabled {
    border-bottom-color: #aca899;
}
.spin button + button:disabled {
    border-top-color: #aca899;
}
.coords input[type="checkbox"] {
    margin-right: 8px;
    background: none;
}
.angle {
    display: flex;
    align-items: center;
    margin: 0 2px 0 5px;
    border: 1px solid #aca899;
}
.coords .angle input {
    width: 50px;
    height: 17px;
    background: none;
    color: #aca899;
}

/* docks */
.docks {
    display: grid;
    grid-template: minmax(0, 1fr) / 610fr 381fr;
    height: 198px;
    padding-top: 2px;
}
.dock {
    display: flex;
    min-width: 0;
}
.dock-side {
    flex: none;
    width: 13px;
    padding: 2px 2px 0;
    background: radial-gradient(circle, #8a8778 1px, transparent 1px) 4px 14px / 4px 4px repeat-y;
}
.dock-close {
    display: block;
    width: 9px;
    height: 10px;
    border-radius: 2px;
    background: #d8402a;
}
.dock-close svg {
    display: block;
    width: 9px;
    height: 10px;
}
.dock-main {
    flex: 1;
    min-width: 0;
    display: flex;
    flex-direction: column;
    margin-right: 5px;
}
.dock:last-child .dock-main {
    margin-right: 0;
}
.dock-main .toolbar {
    margin-bottom: 1px;
}
.more {
    margin: 0 4px 10px auto;
    font-weight: bold;
}
.sheet {
    flex: 1;
    min-height: 0;
    display: grid;
    grid-template: minmax(0, 1fr) 15px / minmax(0, 1fr) 17px;
    border: solid #7f9db9;
    border-width: 1px 1px 0;
    padding-top: 1px;
}
.sheet.open {
    grid-template-columns: minmax(0, 1fr);
    border-right: none;
}
.sheet-view {
    overflow: hidden;
    background: #fff;
}
.bars td {
    height: 29px;
    background: #ccffd9;
    line-height: 12px;
    white-space: normal;
}
.bars .tall td {
    height: 34px;
}
.bars td:nth-child(2), .bars th:nth-child(2) {
    border-right-color: #000;
}
.bars td:nth-child(4) {
    text-align: center;
}
.bars td:last-child {
    white-space: nowrap;
}
.bars th.formula {
    padding-left: 20px;
}
.bars .cut td {
    padding-top: 1px;
    vertical-align: top;
}
.bars td.shape {
    padding: 0;
}
.bars .current .shape {
    background: #b4e8d8;
    outline: 1px dotted #333;
    outline-offset: -1px;
}
.shape svg {
    display: block;
    width: 100%;
}
.shape path, .shape rect {
    fill: none;
    stroke: #000;
    stroke-width: 2;
}
.shape text {
    text-anchor: middle;
}
.shape .len {
    fill: #f00;
}
.spans {
    width: 413px;
}
.spans .cropped {
    text-align: left;
}
.spans td:nth-child(2) {
    border-right-color: #000;
}
.spans .current td {
    background: #a6c8ef;
}
.spans .current .active {
    position: relative;
    overflow: visible;
    background: #93bae9;
    box-shadow: inset 0 0 0 2px #808080, 0 0 0 1px #808080;
}
.active::after {
    content: "";
    position: absolute;
    right: -3px;
    bottom: -3px;
    width: 6px;
    height: 6px;
    background: #808080;
    border: 1px solid #fff;
}
.ring {
    position: absolute;
    left: -8px;
    top: -9px;
    width: 84px;
    height: 38px;
    fill: none;
    stroke: #f04848;
    z-index: 1;
}

/* scrollbars */
.vscroll, .hscroll {
    display: flex;
    background: #f6f5f0;
}
.vscroll {
    flex-direction: column;
}
.hscroll {
    grid-column: 1 / 2;
}
.sb {
    display: grid;
    place-items: center;
    flex: none;
    width: 16px;
    height: 16px;
    border: 1px solid #fff;
    border-radius: 3px;
    background: #c3d3fb;
}
.sb::before {
    content: "";
    width: 7px;
    height: 7px;
    border: solid #3c5277;
    border-width: 2px 0 0 2px;
    transform: rotate(45deg);
}
.sb.left::before {
    transform: rotate(-45deg);
}
.sb.right::before {
    transform: rotate(135deg);
}
.sb.down::before {
    transform: rotate(225deg);
}
.thumb {
    border: 1px solid #98b0e8;
    border-radius: 2px;
    background: repeating-linear-gradient(90deg, #8aa8e8 0 1px, #e8f0ff 1px 2px) center / 8px 7px no-repeat #c3d3fb;
}
.vscroll .thumb {
    height: 17px;
    margin: 1px 1px auto;
    background: repeating-linear-gradient(#8aa8e8 0 1px, #e8f0ff 1px 2px) center / 7px 8px no-repeat #c3d3fb;
}
.hscroll .thumb {
    width: 86px;
    margin: 0 auto 0 1px;
}
.hscroll.far .thumb {
    width: 69px;
    margin: 0 17px 0 auto;
}
```
